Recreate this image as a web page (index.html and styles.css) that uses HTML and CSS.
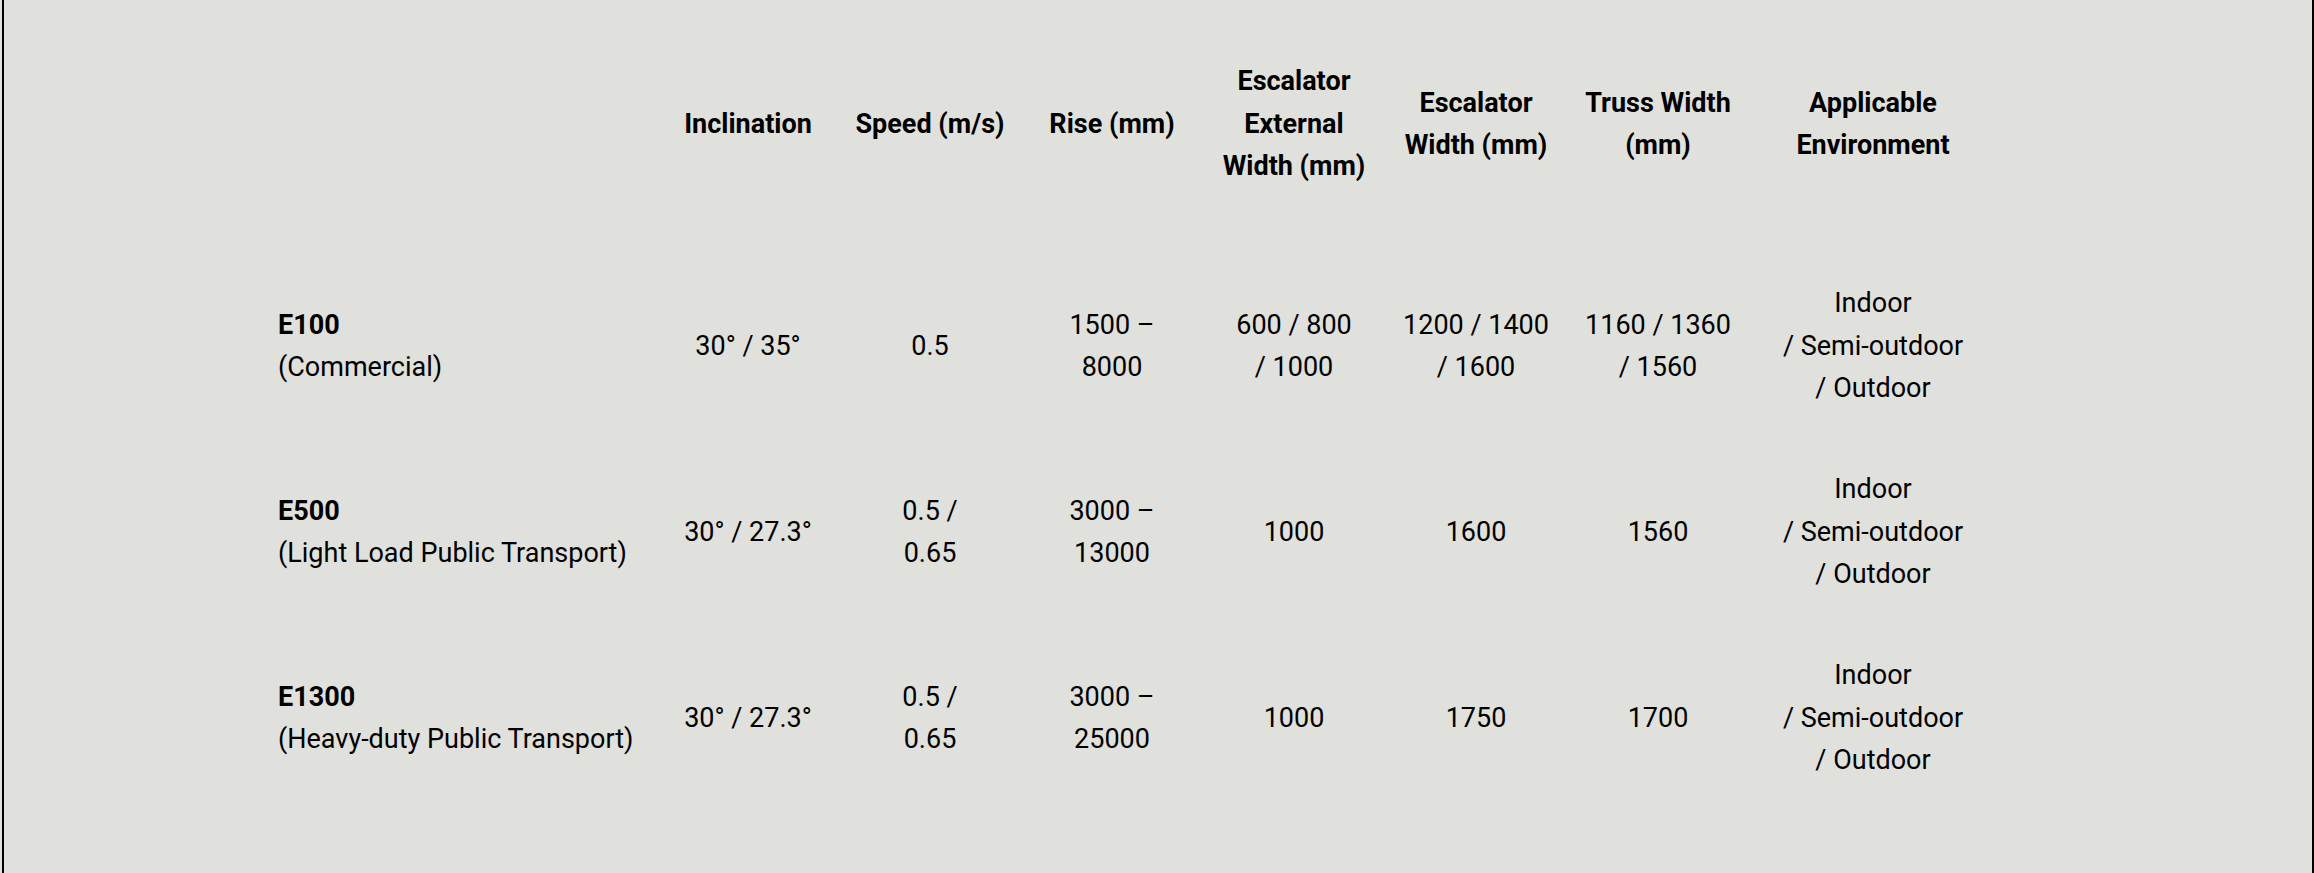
FILE: index.html
```html
<!DOCTYPE html>
<html lang="en">
<head>
<meta charset="utf-8">
<title>Escalator Specifications</title>
<link rel="stylesheet" href="styles.css">
</head>
<body>
<div class="frame">
  <div class="spec-table">
    <div class="cell head model"></div>
    <div class="cell head">Inclination</div>
    <div class="cell head">Speed (m/s)</div>
    <div class="cell head">Rise (mm)</div>
    <div class="cell head">Escalator<br>External<br>Width (mm)</div>
    <div class="cell head">Escalator<br>Width (mm)</div>
    <div class="cell head">Truss Width<br>(mm)</div>
    <div class="cell head">Applicable<br>Environment</div>

    <div class="cell model"><div><b>E100</b><br>(Commercial)</div></div>
    <div class="cell">30° / 35°</div>
    <div class="cell">0.5</div>
    <div class="cell">1500 –<br>8000</div>
    <div class="cell">600 / 800<br>/ 1000</div>
    <div class="cell">1200 / 1400<br>/ 1600</div>
    <div class="cell">1160 / 1360<br>/ 1560</div>
    <div class="cell">Indoor<br>/ Semi-outdoor<br>/ Outdoor</div>

    <div class="cell model"><div><b>E500</b><br>(Light Load Public Transport)</div></div>
    <div class="cell">30° / 27.3°</div>
    <div class="cell">0.5 /<br>0.65</div>
    <div class="cell">3000 –<br>13000</div>
    <div class="cell">1000</div>
    <div class="cell">1600</div>
    <div class="cell">1560</div>
    <div class="cell">Indoor<br>/ Semi-outdoor<br>/ Outdoor</div>

    <div class="cell model"><div><b>E1300</b><br>(Heavy-duty Public Transport)</div></div>
    <div class="cell">30° / 27.3°</div>
    <div class="cell">0.5 /<br>0.65</div>
    <div class="cell">3000 –<br>25000</div>
    <div class="cell">1000</div>
    <div class="cell">1750</div>
    <div class="cell">1700</div>
    <div class="cell">Indoor<br>/ Semi-outdoor<br>/ Outdoor</div>
  </div>
</div>
</body>
</html>
```

FILE: styles.css
```css
html, body {
  margin: 0;
  padding: 0;
  background: #e0e0dc;
}

body {
  font-family: Roboto, "Liberation Sans", sans-serif;
  font-size: 27px;
  line-height: 42.5px;
  color: #000;
}

.frame {
  box-sizing: border-box;
  height: 873px;
  margin-left: 2px;
  border-left: 2px solid #000;
  border-right: 2px solid #000;
  padding-left: 274px;
  overflow: hidden;
}

.spec-table {
  display: grid;
  grid-template-columns: 379px repeat(6, 182px) 248px;
  grid-template-rows: 253px repeat(3, 186px);
}

.cell {
  display: flex;
  align-items: center;
  justify-content: center;
  text-align: center;
  white-space: nowrap;
}

.cell.head {
  font-weight: 700;
  padding-bottom: 5px;
}

.cell.model {
  justify-content: flex-start;
  text-align: left;
}

.cell b {
  font-weight: 700;
}
```
